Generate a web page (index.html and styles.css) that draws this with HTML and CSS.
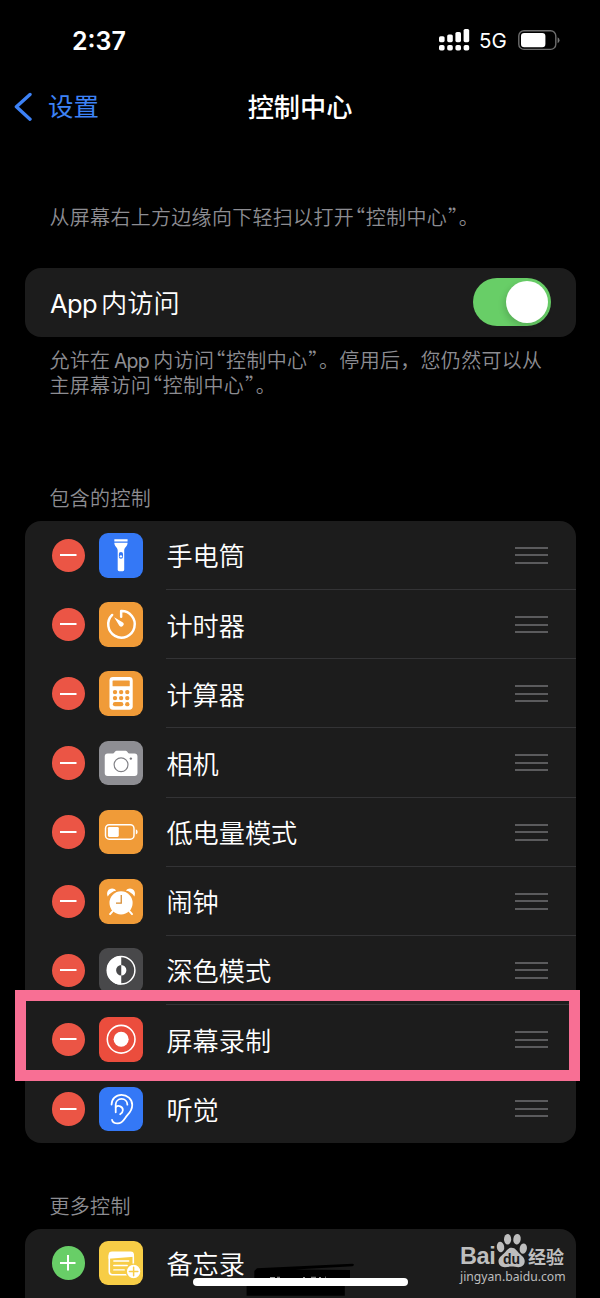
FILE: index.html
```html
<!DOCTYPE html>
<html lang="zh-CN">
<head>
<meta charset="utf-8">
<title>控制中心</title>
<link rel="stylesheet" href="styles.css">
</head>
<body>
<div class="phone">
  <header class="status">
    <span class="time">2:37</span>
    <div class="status-right">
      <svg class="signal" width="31" height="22" viewBox="0 0 31 22" fill="#fff"><rect x="0" y="7.2" width="5.6" height="6" rx="1.6"/><rect x="8.2" y="5.4" width="5.6" height="7.8" rx="1.6"/><rect x="16.4" y="3" width="5.6" height="10.2" rx="1.6"/><rect x="24.6" y="0" width="5.6" height="13.2" rx="1.6"/><rect x="0" y="16" width="5.6" height="5.6" rx="1.8"/><rect x="8.2" y="16" width="5.6" height="5.6" rx="1.8"/><rect x="16.4" y="16" width="5.6" height="5.6" rx="1.8"/><rect x="24.6" y="16" width="5.6" height="5.6" rx="1.8"/></svg>
      <span class="net">5G</span>
      <svg class="battery" width="43" height="21" viewBox="0 0 43 21"><rect x=".8" y=".8" width="37" height="18.6" rx="5.2" fill="none" stroke="#6e6e6e" stroke-width="1.4"/><rect x="3" y="2.9" width="24.4" height="14.4" rx="3.2" fill="#fff"/><path d="M39.6 7.2a3.3 3.3 0 0 1 0 6z" fill="#777"/></svg>
    </div>
  </header>

  <nav class="nav">
    <a class="back"><svg width="18" height="30" viewBox="0 0 18 30"><path d="M16 2.500 2.400 14.800l13.600 12.400" fill="none" stroke="#3d82f6" stroke-width="3.400" stroke-linecap="round" stroke-linejoin="round"/></svg><span>设置</span></a>
    <h1 class="title">控制中心</h1>
  </nav>

  <p class="hint">从屏幕右上方边缘向下轻扫以打开<span class="quote">“</span>控制中心<span class="quote">”</span>。</p>

  <section class="card access">
    <span class="label"><span class="latin">App</span>内访问</span>
    <span class="toggle"><span class="knob"></span></span>
  </section>
  <p class="note">允许在<span class="latin-note">App</span>内访问<span class="quote">“</span>控制中心<span class="quote">”</span>。停用后，您仍然可以从<br>主屏幕访问<span class="quote">“</span>控制中心<span class="quote">”</span>。</p>

  <h2 class="group-title">包含的控制</h2>
  <ul class="card list">
    <li class="row"><i class="remove"></i>
      <svg class="icon blue" viewBox="0 0 45 45"><path d="M15.500 6.400h13.400v2.100H15.500zM15.500 9.800h13.400c0 4-3.200 4.200-3.400 7.600v19.800a1.400 1.400 0 0 1-1.400 1.400h-3.800a1.400 1.400 0 0 1-1.400-1.400V17.400c-.2-3.400-3.400-3.600-3.400-7.600z" fill="#fff"/><rect x="20.100" y="19.200" width="4.200" height="6.800" rx="2.100" fill="#3478f6"/><circle cx="22.200" cy="23.600" r="1.200" fill="#fff"/></svg>
      <span class="name">手电筒</span><i class="handle"></i></li>
    <li class="row"><i class="remove"></i>
      <svg class="icon orange" viewBox="0 0 45 45"><path d="M13.300 13.100a13.400 13.400 0 1 0 9.100-3.900v5.800" fill="none" stroke="#fff" stroke-width="2.500" stroke-linecap="round" stroke-linejoin="round"/><path d="M15.300 15.400l8.500 5a2.400 2.400 0 1 1-3.200 3.500z" fill="#fff"/></svg>
      <span class="name">计时器</span><i class="handle"></i></li>
    <li class="row"><i class="remove"></i>
      <svg class="icon orange" viewBox="0 0 45 45"><rect x="10.600" y="6.100" width="23.500" height="33" rx="3.400" fill="#fff"/><g fill="#f09b38"><rect x="13.700" y="9.500" width="17.400" height="6" rx=".7"/><circle cx="16.200" cy="21.300" r="2.200"/><circle cx="22.400" cy="21.300" r="2.200"/><circle cx="28.600" cy="21.300" r="2.200"/><circle cx="16.200" cy="27.400" r="2.200"/><circle cx="22.400" cy="27.400" r="2.200"/><circle cx="28.600" cy="27.400" r="2.200"/><rect x="14" y="31.400" width="10.600" height="4.200" rx="2.100"/><circle cx="28.600" cy="33.500" r="2.200"/></g></svg>
      <span class="name">计算器</span><i class="handle"></i></li>
    <li class="row"><i class="remove"></i>
      <svg class="icon gray" viewBox="0 0 45 45"><path d="M8.800 12.700h5.100c1.600 0 2-2.900 3.800-2.900h9.300c1.800 0 2.200 2.900 3.800 2.900h5.100a3 3 0 0 1 3 3v16.700a3 3 0 0 1-3 3H8.800a3 3 0 0 1-3-3V15.700a3 3 0 0 1 3-3z" fill="#fff"/><circle cx="22.300" cy="24" r="7" fill="none" stroke="#818186" stroke-width="1.200"/><circle cx="32.200" cy="17.800" r="1.200" fill="#77777c"/></svg>
      <span class="name">相机</span><i class="handle"></i></li>
    <li class="row"><i class="remove"></i>
      <svg class="icon orange" viewBox="0 0 45 45"><rect x="6.600" y="14.900" width="28.800" height="14.600" rx="3.700" fill="none" stroke="#fff" stroke-width="1.500"/><rect x="9" y="17.200" width="11" height="10" rx="1.300" fill="#fff"/><path d="M37.200 19.500q1.900.8 1.900 2.700t-1.900 2.700z" fill="#fff"/></svg>
      <span class="name">低电量模式</span><i class="handle"></i></li>
    <li class="row"><i class="remove"></i>
      <svg class="icon orange" viewBox="0 0 45 45"><circle cx="22.300" cy="24.200" r="11.700" fill="#fff"/><path d="M8.800 17.600c-1.700-4 .4-8.100 4.500-8.100 1.700 0 3.100.8 4.100 2.200a15 15 0 0 0-8.600 5.900zM35.800 17.600c1.700-4-.4-8.100-4.500-8.100-1.700 0-3.100.8-4.100 2.200a15 15 0 0 1 8.600 5.900z" fill="#fff"/><path d="M14.100 32.200l-2.900 3.300M30.500 32.200l2.900 3.300" stroke="#fff" stroke-width="2" stroke-linecap="round"/><path d="M22.500 16.200v8.100h-5.300" fill="none" stroke="#d58a31" stroke-width="1.300"/></svg>
      <span class="name">闹钟</span><i class="handle"></i></li>
    <li class="row"><i class="remove"></i>
      <svg class="icon dark" viewBox="0 0 45 45"><circle cx="22.300" cy="22.500" r="14" fill="none" stroke="#fff" stroke-width="1.500"/><path d="M22.500 8a14.500 14.500 0 0 0 0 29v-9.300a5.200 5.200 0 0 1 0-10.400zM22.500 17.300a5.200 5.200 0 0 1 0 10.400z" fill="#fff"/></svg>
      <span class="name">深色模式</span><i class="handle"></i></li>
    <li class="row"><i class="remove"></i>
      <svg class="icon red" viewBox="0 0 45 45"><circle cx="22.400" cy="22.500" r="14" fill="none" stroke="#fff" stroke-width="1.600"/><circle cx="22.400" cy="22.500" r="7.600" fill="#fff"/></svg>
      <span class="name">屏幕录制</span><i class="handle"></i></li>
    <li class="row"><i class="remove"></i>
      <svg class="icon blue" viewBox="0 0 45 45" fill="none"><g stroke="#fff" stroke-width="1.800" stroke-linecap="round" stroke-linejoin="round"><path d="M12.700 17.800c0-5.700 4.300-9.900 10-9.900s10.900 4.300 10.900 10.200c0 4.600-2 7.300-4.900 10.300-3 3.100-4.300 8.400-9.700 8.400-3 0-5.400-1.300-5.800-3.600"/><path d="M16.900 25.600v-7.800c0-3.400 2.500-5.700 5.900-5.700s5.800 2.300 5.900 5.800"/><path d="M16.900 20.300c2.600-2.300 7.300-.8 7.200 3.100 0 2-1 3.100-2.700 4.200"/></g></svg>
      <span class="name">听觉</span><i class="handle"></i></li>
  </ul>

  <h2 class="group-title more">更多控制</h2>
  <ul class="card list continued">
    <li class="row"><i class="remove add"></i>
      <svg class="icon yellow" viewBox="0 0 45 45"><path d="M9.700 18v-3.800a3.500 3.500 0 0 1 3.500-3.500h18.700a3.500 3.500 0 0 1 3.500 3.500V16z" fill="#fff"/><rect x="10.400" y="13" width="24.300" height="21.100" rx="2.900" fill="none" stroke="#fff" stroke-width="1.600"/><path d="M15 20.200h15M15 24.700h13.500M15 29.200h10.500" stroke="#fff" stroke-width="1.500" stroke-linecap="round"/><circle cx="35" cy="30.800" r="7.400" fill="#fff" stroke="#f7cd46" stroke-width="1.300"/><path d="M35 26.500v8.600M30.700 30.800h8.600" stroke="#f7cd46" stroke-width="1.500" stroke-linecap="round"/></svg>
      <span class="name">备忘录</span></li>
  </ul>

  <div class="highlight"></div>

  <svg class="scribble" width="112" height="34" viewBox="0 0 112 34"><path d="M11 5.200 106.500.7q3 1 0 2.500L49 6.500 104 7v10h-5.200v15.800H.6V17H8.300V8z" fill="#000"/><path d="M24 14.500h5M31 14.300h3M57 14.500h2M65 14.300h5M73 14.500h2M79 14.200h1" stroke="#999"/></svg>
  <div class="home-indicator"></div>

  <div class="watermark">
    <div class="brand">
      <span class="bai">Bai</span>
      <span class="paw"><svg width="31" height="35" viewBox="0 0 31 35" fill="#bebebe"><ellipse cx="4.500" cy="14" rx="3.700" ry="5.300" transform="rotate(-8 4.500 14)"/><ellipse cx="11.600" cy="6.200" rx="3.600" ry="5.300"/><ellipse cx="21" cy="6.200" rx="3.700" ry="5.300" transform="rotate(8 21 6.200)"/><ellipse cx="27.300" cy="15.600" rx="3.600" ry="5.200" transform="rotate(8 27.300 15.600)"/><path d="M15.600 14.700c4 0 5.400 3.700 8 6 2.500 2.300 5.100 4.100 5.100 7.600 0 3.700-2.700 5.900-6.300 5.900-2.500 0-4.300-.6-6.800-.6s-4.300.6-6.800.6c-3.600 0-6.300-2.200-6.300-5.900 0-3.500 2.600-5.300 5.100-7.600 2.600-2.300 4-6 8-6z"/></svg><span class="du">du</span></span>
      <span class="jy">经验</span>
    </div>
    <div class="url">jingyan.baidu.com</div>
  </div>
</div>
</body>
</html>
```
FILE: styles.css
```css
* { box-sizing: border-box; }
body { margin: 0; background: #000; }
.phone {
  position: relative;
  width: 600px;
  height: 1298px;
  overflow: hidden;
  background: #000;
  color: #fff;
  font-family: Inter, "Noto Sans CJK SC", sans-serif;
}
h1, h2, p, ul { margin: 0; padding: 0; }
i { flex: none; }
svg { flex: none; display: block; }

.status {
  display: flex;
  justify-content: space-between;
  align-items: center;
  height: 80px;
  padding: 0 39.500px 0 72px;
}
.time { padding-top: 1px; font-size: 25px; font-weight: 600; line-height: 30px; }
.status-right { display: flex; align-items: center; }
.net { margin-left: 9.500px; padding-top: 2px; width: 38.500px; font-size: 20.500px; font-weight: 400; line-height: 26px; }

.nav {
  display: grid;
  grid-template-columns: 1fr auto 1fr;
  align-items: center;
  height: 53px;
  padding: 0 14px;
}
.back { display: flex; align-items: center; gap: 16px; color: #3d82f6; font-size: 25.500px; line-height: 38px; font-weight: 400; }
.back span { padding-top: 1px; }
.title { padding-top: 2px; font-size: 26.200px; line-height: 38px; font-weight: 500; }

.hint, .note, .group-title {
  padding-left: 49.500px;
  font-size: 20px;
  letter-spacing: .3px;
  line-height: 24.600px;
  font-weight: 350;
  color: #8d8d92;
  white-space: nowrap;
}
.quote {
  display: inline-block;
  width: 11.800px;
  text-align: center;
  letter-spacing: 0;
  font-family: "Noto Sans CJK SC", sans-serif;
  font-feature-settings: "halt";
  line-height: 20px;
}
.hint { margin-top: 73px; }

.card { margin: 0 24.500px 0 25px; border-radius: 16px; background: #1c1c1c; }
.access {
  display: flex;
  align-items: center;
  justify-content: space-between;
  height: 69px;
  margin-top: 37.400px;
  padding: 0 24.500px 0 25px;
}
.label { padding-top: 4px; font-size: 26.200px; line-height: 38px; font-weight: 350; }
.latin { margin-right: 4px; font-size: 25.500px; letter-spacing: -.6px; font-weight: 400; }
.latin-note { margin: 0 4.500px 0 3.500px; font-size: 19.500px; letter-spacing: -.8px; font-weight: 400; }
.toggle {
  display: flex;
  justify-content: flex-end;
  width: 78.500px;
  height: 48px;
  padding: 3px;
  border-radius: 24px;
  background: #68ce67;
}
.knob { width: 42px; height: 42px; border-radius: 50%; background: #fff; box-shadow: -2px 3px 6px rgba(0, 0, 0, .15); }
.note { margin-top: 12.500px; }
.group-title { margin-top: 88.500px; }

.list { margin-top: 9px; list-style: none; }
.row { position: relative; display: flex; align-items: center; height: 69.200px; padding-left: 26.500px; }
.row:not(:last-child)::after {
  content: "";
  position: absolute;
  left: 141px;
  right: 0;
  bottom: 0;
  height: 1px;
  background: #333335;
}
.remove {
  width: 33.400px;
  height: 33.400px;
  border-radius: 50%;
  background: linear-gradient(#fff, #fff) center / 16.500px 2.400px no-repeat #eb5545;
}
.add {
  background: linear-gradient(#fff, #fff) center / 15.500px 2px no-repeat, linear-gradient(#fff, #fff) center / 2px 15.500px no-repeat, #68ce67;
}
.icon { width: 44.500px; height: 44.500px; margin-left: 13.700px; border-radius: 9px; }
.blue { background: #3478f6; }
.orange { background: #f09b38; }
.gray { background: #8e8e93; }
.dark { background: #48484a; }
.red { background: #eb4d3d; }
.yellow { background: #f7cd46; }
.name { flex: 1; margin-left: 23.300px; padding-top: 4px; font-size: 26.200px; line-height: 38px; font-weight: 350; }
.handle {
  width: 33.500px;
  height: 17px;
  margin-right: 27.500px;
  background: linear-gradient(#5b5b5d, #5b5b5d) top / 100% 2px no-repeat, linear-gradient(#5b5b5d, #5b5b5d) center / 100% 2px no-repeat, linear-gradient(#5b5b5d, #5b5b5d) bottom / 100% 2px no-repeat;
}
.more { margin-top: 51.500px; }
.continued { padding-bottom: 20px; }

.highlight { position: absolute; left: 15px; top: 990px; width: 565px; height: 91px; border: 11px solid #f86f94; }
.scribble { position: absolute; left: 246px; top: 1263px; }
.home-indicator { position: absolute; left: 193px; top: 1278px; width: 215px; height: 8px; border-radius: 4px; background: #fff; }

.watermark { position: absolute; left: 460px; top: 1233px; width: 108px; color: #bebebe; }
.brand { display: flex; align-items: flex-end; height: 35px; }
.bai { width: 36px; font: 700 23.500px/24px "Liberation Sans", sans-serif; letter-spacing: -.4px; }
.paw { position: relative; width: 31px; }
.du { position: absolute; left: 7px; top: 19px; color: #1c1c1c; font: 700 14px/15px "Liberation Sans", sans-serif; }
.jy { margin-left: 1px; font-size: 18px; font-weight: 700; line-height: 20px; }
.url { margin-top: 1px; font: 400 12.200px/16px "Noto Sans", sans-serif; }
```
